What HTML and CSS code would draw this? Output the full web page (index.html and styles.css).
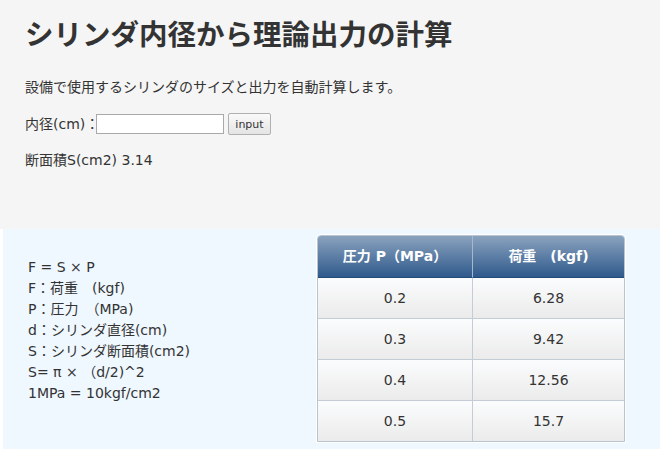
FILE: index.html
```html
<!DOCTYPE html>
<html lang="ja">
<head>
<meta charset="utf-8">
<title>シリンダ内径から理論出力の計算</title>
<link rel="stylesheet" href="styles.css">
</head>
<body>
<section class="hero">
  <h1 class="title">シリンダ内径から理論出力の計算</h1>
  <p class="lead">設備で使用するシリンダのサイズと出力を自動計算します。</p>
  <div class="form-row">
    <label class="label" for="dia">内径(cm)：</label>
    <input class="text-input" id="dia" type="text">
    <button class="btn" type="button">input</button>
  </div>
  <p class="result">断面積S(cm2) 3.14</p>
</section>
<section class="calc">
  <div class="formula">
    <div>F = S × P</div>
    <div>F：荷重　(kgf)</div>
    <div>P：圧力　（MPa)</div>
    <div>d：シリンダ直径(cm)</div>
    <div>S：シリンダ断面積(cm2)</div>
    <div>S= π × （d/2)^2</div>
    <div>1MPa = 10kgf/cm2</div>
  </div>
  <table class="table">
    <thead>
      <tr><th>圧力 P（MPa）</th><th>荷重　(kgf)</th></tr>
    </thead>
    <tbody>
      <tr><td>0.2</td><td>6.28</td></tr>
      <tr><td>0.3</td><td>9.42</td></tr>
      <tr><td>0.4</td><td>12.56</td></tr>
      <tr><td>0.5</td><td>15.7</td></tr>
    </tbody>
  </table>
</section>
</body>
</html>
```
FILE: styles.css
```css
html, body {
  margin: 0;
  padding: 0;
  background: #ffffff;
}
body {
  font-family: "DejaVu Sans", "Noto Sans CJK JP", sans-serif;
  color: #333333;
  font-size: 14px;
  line-height: 21px;
}
.hero {
  background: #f5f5f5;
  padding: 13px 25px 0;
  height: 216px;
}
.title {
  margin: 0;
  font-family: "Noto Sans CJK JP", sans-serif;
  font-size: 28.5px;
  line-height: 40px;
  font-weight: bold;
  color: #333333;
}
.lead {
  margin: 24px 0 0;
}
.form-row {
  display: flex;
  align-items: center;
  height: 22px;
  margin-top: 15px;
}
.label {
  flex-shrink: 0;
  white-space: nowrap;
  width: 71px;
}
.text-input {
  box-sizing: border-box;
  flex-shrink: 0;
  width: 128px;
  height: 20px;
  border: 1px solid #a9a9a9;
  background: #ffffff;
  margin: 0;
  padding: 0 2px;
}
.btn {
  box-sizing: border-box;
  flex-shrink: 0;
  margin-left: 4px;
  width: 43px;
  height: 22px;
  border: 1px solid #b0b0b0;
  border-radius: 2px;
  background: linear-gradient(#fafafa, #e4e4e4);
  font-family: "DejaVu Sans", sans-serif;
  font-size: 11px;
  color: #333333;
  padding: 0;
}
.result {
  margin: 15px 0 0;
}
.calc {
  margin-left: 3px;
  background: #eff7ff;
  display: flex;
  align-items: flex-start;
  padding: 6px 0 7px;
}
.formula {
  width: 289px;
  padding: 22px 0 0 25px;
}
.table {
  border-collapse: separate;
  border-spacing: 0;
  width: 308px;
  border: 1px solid #b9c3ce;
  border-radius: 4px 4px 0 0;
  box-shadow: 0 0 0 1px #ffffff;
  font-size: 14px;
}
.table th {
  height: 41px;
  padding: 0;
  color: #ffffff;
  font-size: 14px;
  font-weight: bold;
  background: linear-gradient(#8aa2be, #2f5a8c);
  border-bottom: 1px solid #244a78;
  text-align: center;
}
.table th:first-child {
  border-right: 1px solid #a8b8cb;
  border-top-left-radius: 3px;
  width: 154px;
}
.table th:last-child {
  border-top-right-radius: 3px;
}
.table td {
  height: 40px;
  padding: 0;
  text-align: center;
  background: linear-gradient(#fbfcfd, #ebebeb);
  border-top: 1px solid #c4ccd6;
}
.table tbody tr:first-child td {
  border-top: none;
}
.table td:first-child {
  border-right: 1px solid #c4ccd6;
}
```
